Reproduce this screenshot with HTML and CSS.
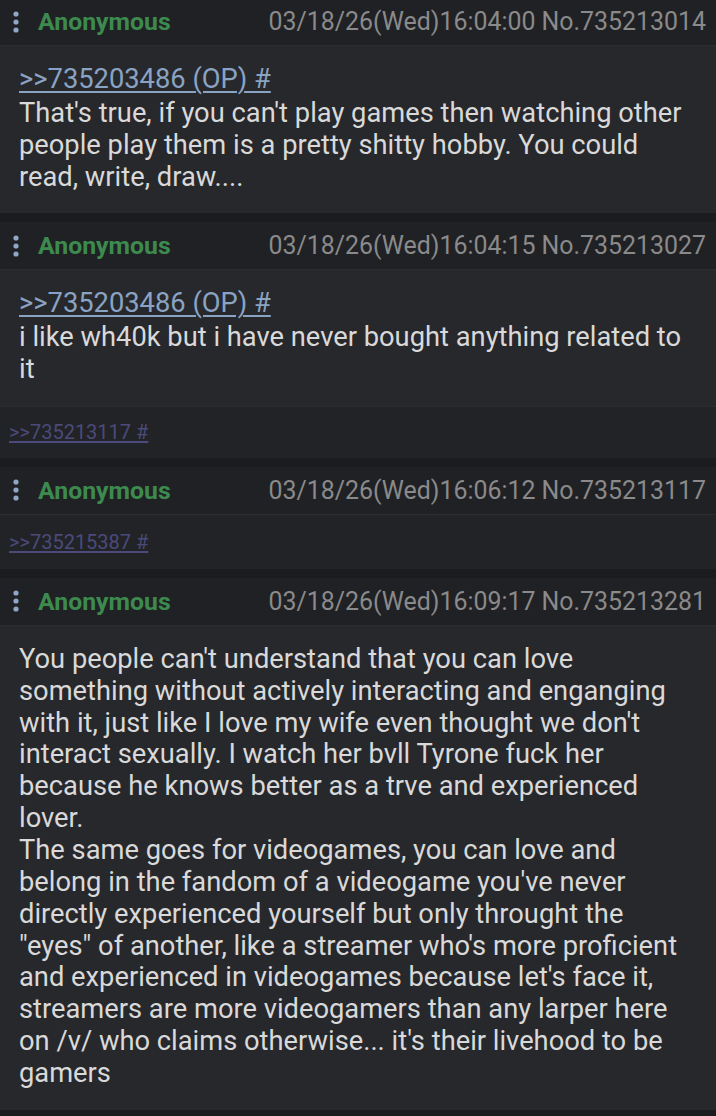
FILE: index.html
```html
<!DOCTYPE html>
<html>
<head>
<meta charset="utf-8">
<link rel="stylesheet" href="styles.css">
</head>
<body>
<div class="thread">
  <div class="post first">
    <div class="head">
      <svg class="dots" width="8" height="24" viewBox="0 0 8 24"><circle cx="4" cy="4" r="2.6"/><circle cx="4" cy="12" r="2.6"/><circle cx="4" cy="20" r="2.6"/></svg>
      <span class="name">Anonymous</span>
      <span class="meta">03/18/26(Wed)16:04:00 No.735213014</span>
    </div>
    <div class="body">
      <a class="quote">&gt;&gt;735203486 (OP) #</a>
      <div>That's true, if you can't play games then watching other people play them is a pretty shitty hobby. You could read, write, draw....</div>
    </div>
  </div>

  <div class="post">
    <div class="head">
      <svg class="dots" width="8" height="24" viewBox="0 0 8 24"><circle cx="4" cy="4" r="2.6"/><circle cx="4" cy="12" r="2.6"/><circle cx="4" cy="20" r="2.6"/></svg>
      <span class="name">Anonymous</span>
      <span class="meta">03/18/26(Wed)16:04:15 No.735213027</span>
    </div>
    <div class="body">
      <a class="quote">&gt;&gt;735203486 (OP) #</a>
      <div>i like wh40k but i have never bought anything related to it</div>
    </div>
    <div class="replies"><a class="reply">&gt;&gt;735213117 #</a></div>
  </div>

  <div class="post">
    <div class="head">
      <svg class="dots" width="8" height="24" viewBox="0 0 8 24"><circle cx="4" cy="4" r="2.6"/><circle cx="4" cy="12" r="2.6"/><circle cx="4" cy="20" r="2.6"/></svg>
      <span class="name">Anonymous</span>
      <span class="meta">03/18/26(Wed)16:06:12 No.735213117</span>
    </div>
    <div class="replies"><a class="reply">&gt;&gt;735215387 #</a></div>
  </div>

  <div class="post">
    <div class="head">
      <svg class="dots" width="8" height="24" viewBox="0 0 8 24"><circle cx="4" cy="4" r="2.6"/><circle cx="4" cy="12" r="2.6"/><circle cx="4" cy="20" r="2.6"/></svg>
      <span class="name">Anonymous</span>
      <span class="meta">03/18/26(Wed)16:09:17 No.735213281</span>
    </div>
    <div class="body">
      <div>You people can't understand that you can love something without actively interacting and enganging with it, just like I love my wife even thought we don't interact sexually. I watch her bvll Tyrone fuck her because he knows better as a trve and experienced lover.</div>
      <div>The same goes for videogames, you can love and belong in the fandom of a videogame you've never directly experienced yourself but only throught the "eyes" of another, like a streamer who's more proficient and experienced in videogames because let's face it, streamers are more videogamers than any larper here on /v/ who claims otherwise... it's their livehood to be gamers</div>
    </div>
  </div>
</div>
</body>
</html>
```

FILE: styles.css
```css
html, body {
  margin: 0;
  padding: 0;
  background: #1b1c1f;
}
body {
  font-family: Roboto, "Noto Sans", sans-serif;
  width: 716px;
  overflow: hidden;
}
.thread {
  display: flex;
  flex-direction: column;
  gap: 9px;
  margin-top: -2px;
}
.post {
  display: flex;
  flex-direction: column;
}
.head {
  height: 48px;
  background: #202124;
  border-bottom: 1px solid #2c2d31;
  display: flex;
  align-items: center;
  padding: 0 10px 0 12px;
  box-sizing: border-box;
}
.dots {
  fill: #8fa6c4;
  margin-right: 18px;
  flex: none;
}
.name {
  color: #3d8a4f;
  font-weight: bold;
  font-size: 24.8px;
}
.meta {
  margin-left: auto;
  color: #8a8a8a;
  font-size: 24.9px;
}
.body {
  background: #27282c;
  color: #d9d9d9;
  font-size: 27.3px;
  line-height: 31.85px;
  padding: 18px 20px 20px 19px;
}
.quote {
  display: block;
  margin-bottom: 2px;
  color: #8aa3c3;
  text-decoration: underline;
  text-decoration-thickness: 1.5px;
  text-underline-offset: 3px;
}
.replies {
  background: #222327;
  border-top: 1px solid #2c2d31;
  height: 51px;
  display: flex;
  align-items: center;
  padding-left: 9px;
}
.head + .replies {
  border-top: none;
  height: 54px;
}
.reply {
  color: #4b4a7a;
  font-size: 20px;
  text-decoration: underline;
  text-underline-offset: 2px;
}
```
